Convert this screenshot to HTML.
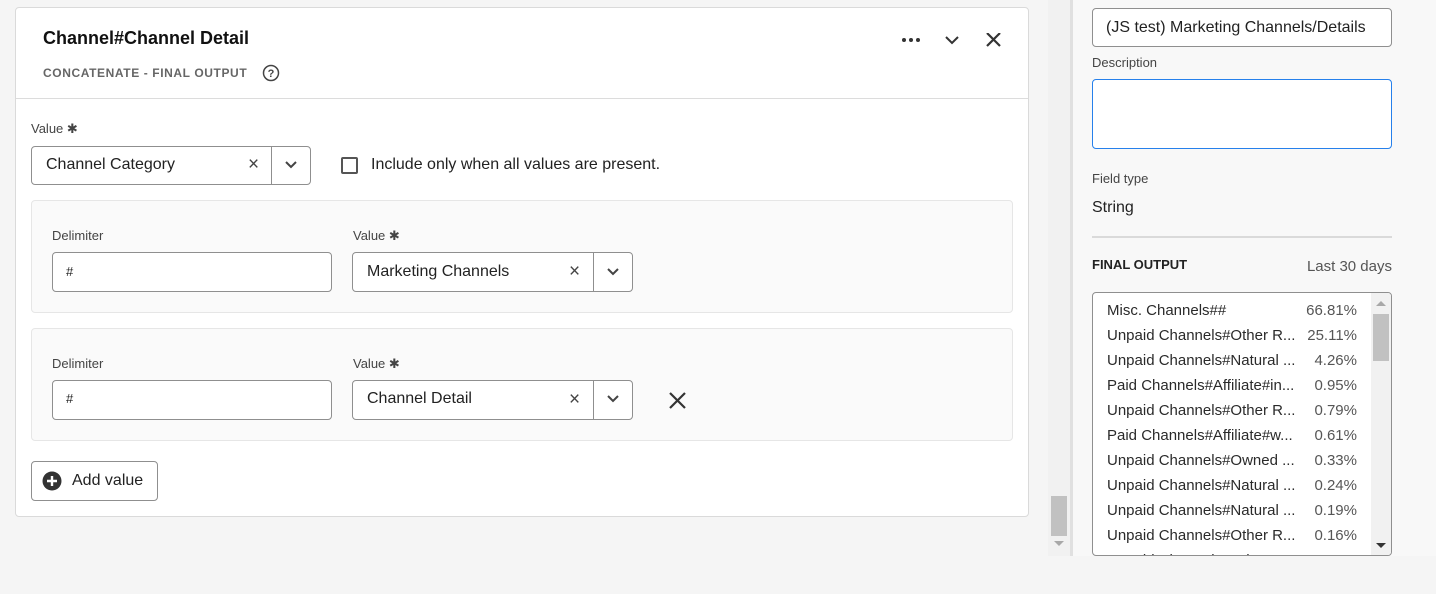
<!DOCTYPE html>
<html><head><meta charset="utf-8"><style>
*{box-sizing:border-box;margin:0;padding:0}
body{width:1436px;height:594px;background:#f5f5f5;font-family:"Liberation Sans",sans-serif;color:#222;position:relative;overflow:hidden}
.a{position:absolute}
.card{left:15px;top:7px;width:1014px;height:510px;background:#fff;border:1px solid #dadada;border-radius:4px}
.lbl{font-size:13px;color:#444}
.inp{background:#fff;border:1px solid #8f8f8f;border-radius:4px}
.txt{font-size:16px;color:#222}
.grp{background:#fafafa;border:1px solid #e6e6e6;border-radius:4px}
.sep{border-left:1px solid #8f8f8f}
.row{position:absolute;left:14px;right:34px;font-size:15px;color:#2a2a2a;display:flex;justify-content:space-between;white-space:nowrap}
.row span:last-child{color:#555}
.x{font-size:19px;color:#444}
</style></head><body>
<div class="a card"></div>
<div class="a" style="left:43px;top:28px;font-size:18px;font-weight:bold;color:#111">Channel#Channel Detail</div>
<div class="a" style="left:43px;top:66px;font-size:12px;font-weight:bold;color:#666;letter-spacing:0.6px">CONCATENATE - FINAL OUTPUT</div>
<svg class="a" style="left:262px;top:64px" width="18" height="18"><circle cx="9" cy="9" r="7.5" fill="none" stroke="#444" stroke-width="1.5"/><text x="9" y="13" font-size="11" text-anchor="middle" font-family="Liberation Sans" fill="#444" font-weight="bold">?</text></svg>
<svg class="a" style="left:900px;top:33px" width="110" height="16"><circle cx="4" cy="7" r="2" fill="#333"/><circle cx="11" cy="7" r="2" fill="#333"/><circle cx="18" cy="7" r="2" fill="#333"/><path d="M46 4l6 6 6-6" fill="none" stroke="#333" stroke-width="2"/><path d="M87 0l13 13M100 0l-13 13" stroke="#333" stroke-width="2.2"/></svg>
<div class="a" style="left:16px;top:98px;width:1012px;border-top:1px solid #dcdcdc"></div>

<div class="a lbl" style="left:31px;top:121px">Value ✱</div>
<div class="a inp" style="left:31px;top:146px;width:280px;height:39px"></div>
<div class="a txt" style="left:46px;top:156px">Channel Category</div>
<div class="a x" style="left:248px;top:154px">×</div>
<div class="a sep" style="left:271px;top:146px;height:39px"></div>
<svg class="a" style="left:284px;top:160px" width="14" height="10"><path d="M2 2l5 5 5-5" fill="none" stroke="#444" stroke-width="2"/></svg>
<div class="a" style="left:341px;top:157px;width:17px;height:17px;border:2px solid #555;border-radius:2px"></div>
<div class="a txt" style="left:371px;top:156px">Include only when all values are present.</div>

<div class="a grp" style="left:31px;top:200px;width:982px;height:113px"></div>
<div class="a lbl" style="left:52px;top:228px">Delimiter</div>
<div class="a lbl" style="left:353px;top:228px">Value ✱</div>
<div class="a inp" style="left:52px;top:252px;width:280px;height:40px"></div>
<div class="a" style="left:66px;top:264px;font-size:13px">#</div>
<div class="a inp" style="left:352px;top:252px;width:281px;height:40px"></div>
<div class="a txt" style="left:367px;top:263px">Marketing Channels</div>
<div class="a x" style="left:569px;top:261px">×</div>
<div class="a sep" style="left:593px;top:252px;height:40px"></div>
<svg class="a" style="left:606px;top:267px" width="14" height="10"><path d="M2 2l5 5 5-5" fill="none" stroke="#444" stroke-width="2"/></svg>

<div class="a grp" style="left:31px;top:328px;width:982px;height:113px"></div>
<div class="a lbl" style="left:52px;top:356px">Delimiter</div>
<div class="a lbl" style="left:353px;top:356px">Value ✱</div>
<div class="a inp" style="left:52px;top:380px;width:280px;height:40px"></div>
<div class="a" style="left:66px;top:391px;font-size:13px">#</div>
<div class="a inp" style="left:352px;top:380px;width:281px;height:40px"></div>
<div class="a txt" style="left:367px;top:390px">Channel Detail</div>
<div class="a x" style="left:569px;top:389px">×</div>
<div class="a sep" style="left:593px;top:380px;height:40px"></div>
<svg class="a" style="left:606px;top:394px" width="14" height="10"><path d="M2 2l5 5 5-5" fill="none" stroke="#444" stroke-width="2"/></svg>
<svg class="a" style="left:669px;top:392px" width="17" height="17"><path d="M1 1l15 15M16 1l-15 15" stroke="#333" stroke-width="2.2"/></svg>

<div class="a" style="left:31px;top:461px;width:127px;height:40px;border:1px solid #8f8f8f;border-radius:4px;background:#fff"></div>
<svg class="a" style="left:42px;top:471px" width="20" height="20"><circle cx="10" cy="10" r="9.5" fill="#333"/><path d="M10 5v10M5 10h10" stroke="#fff" stroke-width="2.4"/></svg>
<div class="a txt" style="left:72px;top:472px">Add value</div>

<div class="a" style="left:1048px;top:0;width:22px;height:556px;background:#f1f1f1"></div>
<div class="a" style="left:1051px;top:496px;width:16px;height:40px;background:#c1c1c1"></div>
<svg class="a" style="left:1053px;top:540px" width="12" height="8"><path d="M1 1h10l-5 5z" fill="#a8a8a8"/></svg>
<div class="a" style="left:1070px;top:0;width:3px;height:556px;background:#e0e0e0"></div>
<div class="a" style="left:1073px;top:0;width:363px;height:556px;background:#f8f8f8"></div>

<div class="a inp" style="left:1092px;top:8px;width:300px;height:39px"></div>
<div class="a txt" style="left:1106px;top:19px">(JS test) Marketing Channels/Details</div>
<div class="a lbl" style="left:1092px;top:55px">Description</div>
<div class="a" style="left:1092px;top:79px;width:300px;height:70px;background:#fff;border:1px solid #2680eb;border-radius:4px"></div>
<div class="a lbl" style="left:1092px;top:171px">Field type</div>
<div class="a txt" style="left:1092px;top:199px">String</div>
<div class="a" style="left:1092px;top:236px;width:300px;border-top:2px solid #dadada"></div>
<div class="a" style="left:1092px;top:257px;font-size:13px;font-weight:bold;color:#222">FINAL OUTPUT</div>
<div class="a" style="left:1280px;top:258px;width:112px;text-align:right;font-size:15px;color:#555">Last 30 days</div>

<div class="a" style="left:1092px;top:292px;width:300px;height:264px;background:#fff;border:1px solid #8f8f8f;border-radius:4px;overflow:hidden">
<div class="row" style="top:9px"><span>Misc. Channels##</span><span>66.81%</span></div>
<div class="row" style="top:34px"><span>Unpaid Channels#Other R...</span><span>25.11%</span></div>
<div class="row" style="top:59px"><span>Unpaid Channels#Natural ...</span><span>4.26%</span></div>
<div class="row" style="top:84px"><span>Paid Channels#Affiliate#in...</span><span>0.95%</span></div>
<div class="row" style="top:109px"><span>Unpaid Channels#Other R...</span><span>0.79%</span></div>
<div class="row" style="top:134px"><span>Paid Channels#Affiliate#w...</span><span>0.61%</span></div>
<div class="row" style="top:159px"><span>Unpaid Channels#Owned ...</span><span>0.33%</span></div>
<div class="row" style="top:184px"><span>Unpaid Channels#Natural ...</span><span>0.24%</span></div>
<div class="row" style="top:209px"><span>Unpaid Channels#Natural ...</span><span>0.19%</span></div>
<div class="row" style="top:234px"><span>Unpaid Channels#Other R...</span><span>0.16%</span></div>
<div class="row" style="top:259px"><span>Unpaid Channels#Other R...</span><span>0.14%</span></div>
<div class="a" style="left:278px;top:0;width:20px;height:264px;background:#f1f1f1"></div>
<div class="a" style="left:280px;top:21px;width:16px;height:47px;background:#c1c1c1"></div>
<svg class="a" style="left:282px;top:7px" width="12" height="8"><path d="M1 6h10l-5-5z" fill="#a8a8a8"/></svg>
<svg class="a" style="left:282px;top:249px" width="12" height="8"><path d="M1 1h10l-5 5z" fill="#333"/></svg>
</div>
<div class="a" style="left:1092px;top:556px;width:300px;height:38px;background:#f5f5f5"></div>
</body></html>
